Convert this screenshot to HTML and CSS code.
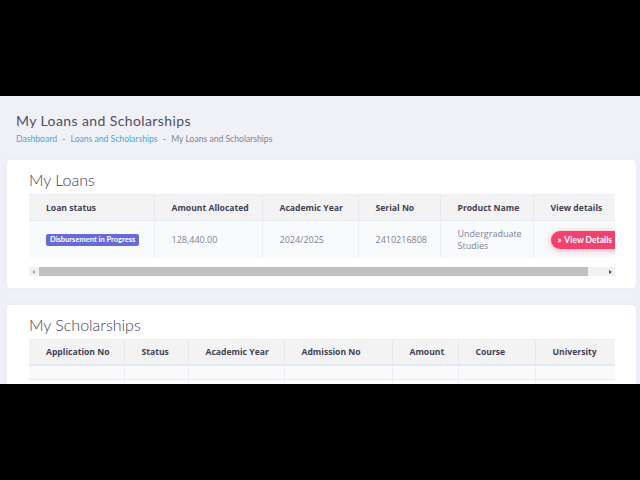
FILE: index.html
```html
<!DOCTYPE html>
<html>
<head>
  <meta charset="UTF-8">
  <title>My Loans and Scholarships</title>
  <link rel="stylesheet" href="styles.css">
</head>
<body>
  <div class="screen">
    <div class="toolbar">
      <h1 class="page-title">My Loans and Scholarships</h1>
      <div class="crumbs">
        <a href="#">Dashboard</a>
        <span class="sep">-</span>
        <a href="#">Loans and Scholarships</a>
        <span class="sep">-</span>
        <span class="here">My Loans and Scholarships</span>
      </div>
    </div>

    <div class="card">
      <h2 class="card-title">My Loans</h2>
      <div class="scroll">
        <table class="grid loans">
          <colgroup>
            <col style="width:125px"><col style="width:108px"><col style="width:96px">
            <col style="width:82px"><col style="width:93px"><col style="width:103px">
          </colgroup>
          <thead>
            <tr>
              <th>Loan status</th>
              <th>Amount Allocated</th>
              <th>Academic Year</th>
              <th>Serial No</th>
              <th>Product Name</th>
              <th>View details</th>
            </tr>
          </thead>
          <tbody>
            <tr>
              <td><span class="badge">Disbursement in Progress</span></td>
              <td>128,440.00</td>
              <td>2024/2025</td>
              <td>2410216808</td>
              <td>Undergraduate Studies</td>
              <td><a href="#" class="btn-view"><span class="chev">&raquo;</span> View Details</a></td>
            </tr>
          </tbody>
        </table>
      </div>
      <div class="hbar">
        <span class="hbar-btn left"></span>
        <span class="hbar-track"><span class="hbar-thumb"></span></span>
        <span class="hbar-btn right"></span>
      </div>
    </div>

    <div class="card">
      <h2 class="card-title">My Scholarships</h2>
      <div class="scroll">
        <table class="grid scholars">
          <colgroup>
            <col style="width:95px"><col style="width:64px"><col style="width:96px">
            <col style="width:108px"><col style="width:66px"><col style="width:77px">
            <col style="width:80px">
          </colgroup>
          <thead>
            <tr>
              <th>Application No</th>
              <th>Status</th>
              <th>Academic Year</th>
              <th>Admission No</th>
              <th>Amount</th>
              <th>Course</th>
              <th>University</th>
            </tr>
          </thead>
          <tbody>
            <tr class="thin"><td></td><td></td><td></td><td></td><td></td><td></td><td></td></tr>
            <tr class="blank"><td></td><td></td><td></td><td></td><td></td><td></td><td></td></tr>
          </tbody>
        </table>
      </div>
    </div>
  </div>
</body>
</html>
```

FILE: styles.css
```css
body{
  margin: 0;
  background-color: black;
}
.screen{
  margin-top: 96px;
  height: 288px;
  overflow: hidden;
  background-color: #f0f1f7;
  padding: 0 4px 0 7px;
}
.toolbar{
  padding: 16px 0 0 9px;
}
.page-title{
  margin: 0;
  font-family: "Lato", sans-serif;
  font-weight: 400;
  font-size: 14px;
  line-height: 18px;
  letter-spacing: 0.4px;
  color: #4d5061;
}
.crumbs{
  margin-top: 3px;
  font-family: "Lato", sans-serif;
  font-size: 8.6px;
  line-height: 12px;
  color: #7e8299;
}
.crumbs a{
  color: #4ea4d8;
  text-decoration: none;
}
.crumbs .sep{
  margin: 0 3px;
}
.card{
  margin-top: 15px;
  background-color: white;
  border-radius: 4px;
  padding: 10px 21px 12px 22px;
  box-shadow: 0 0 6px rgba(80, 90, 140, 0.05);
}
.card + .card{
  margin-top: 17px;
}
.card-title{
  margin: 0 0 4px;
  font-family: "Lato", sans-serif;
  font-weight: 300;
  font-size: 16px;
  line-height: 20px;
  color: #3f4254;
}
.scroll{
  overflow: hidden;
}
.hbar{
  display: flex;
  height: 9px;
  margin-top: 9px;
  background-color: #f1f1f1;
}
.hbar-btn{
  width: 9px;
  display: flex;
  align-items: center;
  justify-content: center;
}
.hbar-btn.left::before{
  content: "";
  border-right: 3px solid #a8a8a8;
  border-top: 2px solid transparent;
  border-bottom: 2px solid transparent;
}
.hbar-btn.right::before{
  content: "";
  border-left: 3px solid #505050;
  border-top: 2px solid transparent;
  border-bottom: 2px solid transparent;
}
.hbar-track{
  flex: 1;
  padding-left: 1px;
}
.hbar-thumb{
  display: block;
  width: 549px;
  height: 100%;
  background-color: #c1c1c1;
}
.grid{
  table-layout: fixed;
  border-collapse: collapse;
  font-family: "Open Sans", sans-serif;
  font-size: 9px;
}
.loans{
  width: 607px;
}
.scholars{
  width: 586px;
}
.grid th{
  height: 25px;
  padding: 0 17px;
  text-align: left;
  font-size: 8.6px;
  font-weight: 700;
  color: #3f4254;
  background-color: #f3f3f4;
  border-top: 1px solid #ebecef;
  border-right: 1px solid #e8e9ec;
  white-space: nowrap;
}
.grid td{
  padding: 0 17px;
  color: #7e8299;
  line-height: 12px;
  background-color: #f9fafc;
  border-right: 1px solid #eef0f4;
  border-top: 1px solid #e6ecf5;
  white-space: nowrap;
}
.grid th:last-child,
.grid td:last-child{
  border-right: none;
}
.loans td{
  height: 37px;
  white-space: normal;
}
.loans td:last-child{
  white-space: nowrap;
}
.scholars th{
  height: 24px;
}
.scholars .thin td{
  height: 13px;
  border-top: 2px solid #e1e9f4;
}
.scholars .blank td{
  height: 20px;
  background-color: white;
}
.badge{
  display: inline-block;
  padding: 0 4px;
  height: 12px;
  line-height: 12px;
  border-radius: 2px;
  background-color: #676bd6;
  color: white;
  font-family: "Lato", sans-serif;
  font-weight: 700;
  font-size: 7.5px;
  white-space: nowrap;
}
.btn-view{
  display: inline-block;
  height: 18px;
  line-height: 18px;
  padding: 0 14px 0 7px;
  border-radius: 9px;
  background-color: #f1416c;
  box-shadow: 0 1px 6px rgba(241, 65, 108, 0.45);
  color: white;
  text-decoration: none;
  font-family: "Lato", sans-serif;
  font-weight: 700;
  font-size: 8.5px;
}
.chev{
  font-size: 9px;
  margin-right: 1px;
}
```
